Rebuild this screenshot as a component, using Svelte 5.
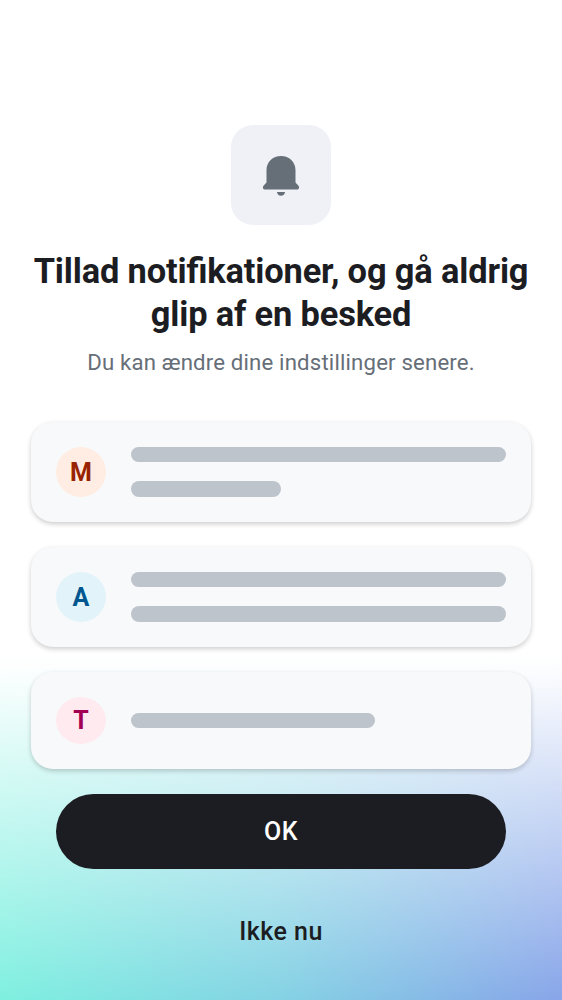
<script>
  const cards = [
    { letter: 'M', tone: 'orange', lines: [100, 40] },
    { letter: 'A', tone: 'blue', lines: [100, 100] },
    { letter: 'T', tone: 'pink', lines: [65] }
  ];
</script>

<main class="screen">
  <div class="bell">
    <svg viewBox="0 0 40 44" width="40" height="44" aria-hidden="true">
      <path d="M20 3C11.800 3 5.500 9 5.500 17V29.500L2.700 32.400C1.200 34 2 36.600 4.200 36.600H35.800C38 36.600 38.800 34 37.300 32.400L34.500 29.500V17C34.500 9 28.200 3 20 3Z" />
      <path d="M16 39H24C23.800 41.300 22.200 42.800 20 42.800S16.200 41.300 16 39Z" />
    </svg>
  </div>

  <h1>Tillad notifikationer, og gå aldrig<br />glip af en besked</h1>
  <p>Du kan ændre dine indstillinger senere.</p>

  <div class="cards">
    {#each cards as card}
      <div class="card" class:short={card.lines.length === 1}>
        <div class="avatar {card.tone}">{card.letter}</div>
        <div class="lines">
          {#each card.lines as width}
            <div class="line" style="width: {width}%"></div>
          {/each}
        </div>
      </div>
    {/each}
  </div>

  <button class="ok">OK</button>
  <button class="skip">Ikke nu</button>
</main>

<style>
  :global(body) {
    margin: 0;
    background: #fff;
  }
  .screen {
    box-sizing: border-box;
    width: 562px;
    height: 1000px;
    padding: 125px 31px 0;
    display: flex;
    flex-direction: column;
    align-items: center;
    overflow: hidden;
    font-family: Roboto, sans-serif;
    color: #1c1d22;
    background:
      linear-gradient(to bottom, #fff 655px, rgba(255, 255, 255, 0.97) 672px, rgba(255, 255, 255, 0.65) 780px, rgba(255, 255, 255, 0.36) 880px, rgba(255, 255, 255, 0) 1000px),
      linear-gradient(90deg, #7ff0e0 0%, #84d2e4 50%, #88a5e9 100%);
  }
  .bell {
    width: 100px;
    height: 100px;
    border-radius: 22px;
    background: #f0f1f6;
    display: flex;
    align-items: center;
    justify-content: center;
  }
  .bell svg {
    fill: #666e78;
  }
  h1 {
    margin: 25px 0 0;
    font-size: 34.400px;
    line-height: 42.500px;
    font-weight: 700;
    letter-spacing: -0.140px;
    font-feature-settings: "liga" 1;
    text-align: center;
    white-space: nowrap;
  }
  p {
    margin: 12px 0 0;
    font-size: 22.200px;
    line-height: 30px;
    letter-spacing: 0.170px;
    color: #666e78;
    white-space: nowrap;
  }
  .cards {
    width: 100%;
    margin-top: 44.500px;
    display: flex;
    flex-direction: column;
    gap: 24.500px;
  }
  .card {
    box-sizing: border-box;
    height: 100.500px;
    padding: 0 25px;
    border-radius: 22px;
    background: #f8f9fb;
    display: flex;
    align-items: center;
    gap: 25px;
    box-shadow: 0 2px 5px rgba(0, 0, 0, 0.2);
  }
  .card.short {
    height: 97.500px;
  }
  .avatar {
    box-sizing: border-box;
    width: 50px;
    height: 50px;
    padding-top: 2px;
    border-radius: 50%;
    flex: none;
    display: flex;
    align-items: center;
    justify-content: center;
    font-size: 25px;
    font-weight: 700;
  }
  .short .avatar {
    height: 47px;
    padding-top: 0;
  }
  .orange { background: #ffede3; color: #992300; }
  .blue { background: #e2f4f9; color: #00568f; }
  .pink { background: #ffeaef; color: #a30052; }
  .lines {
    flex: 1;
    display: flex;
    flex-direction: column;
    gap: 19px;
  }
  .line {
    height: 15.500px;
    border-radius: 8px;
    background: #bdc4cc;
  }
  button {
    border: 0;
    padding: 0;
    font: 500 25px/30px Roboto, sans-serif;
    letter-spacing: 0.450px;
  }
  .ok {
    width: 450px;
    height: 75px;
    margin-top: 25px;
    border-radius: 38px;
    background: #1c1d22;
    color: #fff;
  }
  .skip {
    width: 450px;
    height: 75px;
    margin-top: 25px;
    background: transparent;
    color: #1c1d22;
  }
</style>
